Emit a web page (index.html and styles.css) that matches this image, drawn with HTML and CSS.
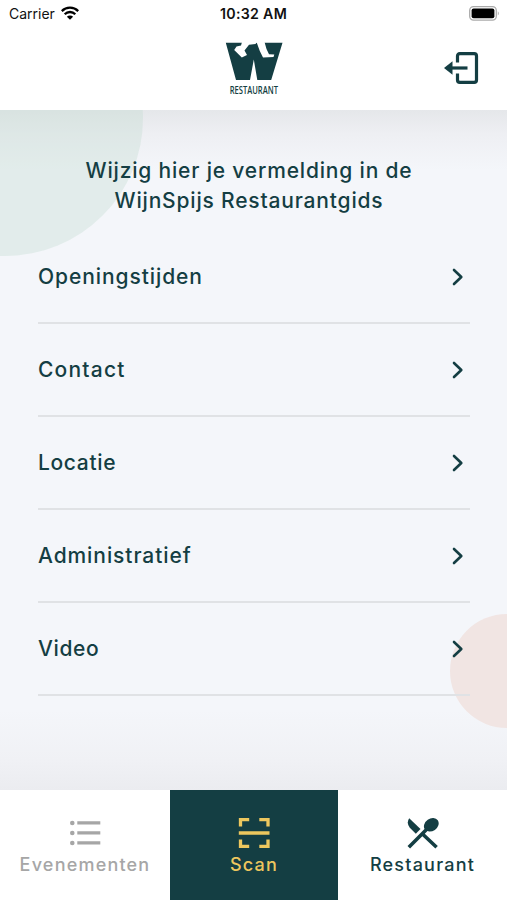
FILE: index.html
```
<!DOCTYPE html>
<html lang="nl">
<head>
    <meta charset="UTF-8">
    <meta name="viewport" content="width=device-width, initial-scale=1.0">
    <title>WijnSpijs Restaurant</title>
    <link rel="stylesheet" href="styles.css">
</head>
<body>
    <div class="app">
        <header class="header">
            <div class="status-bar">
                <div class="carrier">
                    <span class="carrier-name">Carrier</span>
                    <svg width="18" height="14" viewBox="0 0 18 14">
                        <g fill="none" stroke="#000" stroke-width="2.3">
                            <path d="M.8 5.1a11.6 11.6 0 0 1 16.4 0"/>
                            <path d="M3.7 8.2a7.5 7.5 0 0 1 10.6 0"/>
                        </g>
                        <path d="M9 13.8 5.9 10.7a4.4 4.4 0 0 1 6.2 0z"/>
                    </svg>
                </div>
                <div class="time">10:32 AM</div>
                <svg class="battery" width="32" height="15" viewBox="0 0 32 15">
                    <rect x=".7" y=".7" width="26.6" height="13.4" rx="3.8" fill="#fff" stroke="#aaa" stroke-width="1.3"/>
                    <rect x="2.6" y="2.6" width="22.8" height="9.6" rx="2"/>
                    <path d="M28.8 5.2q2 2.2 0 4.4z" fill="#aaa"/>
                </svg>
            </div>
            <div class="title-bar">
                <div class="logo">
                    <svg width="58" height="38" viewBox="0 0 58 38">
                        <path fill="#143e43" d="M.8.8H57.5L46.2 38H32.3L28.8 17.5 25 38H11z"/>
                        <path fill="#fff" d="M17 0H32L30.5 2 24 2.8 19.5 8.5 22 13 16.8 15.6 9.2 8 11.5 4.5 16 3.5z"/>
                        <path fill="#fff" d="M31.5 0H39.5L41.5 7 44 12.3 49.3 12.6 48.5 15 38 15.6 34.8 9z"/>
                    </svg>
                    <span class="logo-text">RESTAURANT</span>
                </div>
                <svg class="logout" width="36" height="34" viewBox="0 0 36 34">
                    <g fill="none" stroke="#143e43" stroke-width="3.2">
                        <path d="M13.5 11.5V5q0-2.3 2.3-2.3h14.4q2.3 0 2.3 2.3v24q0 2.3-2.3 2.3H15.8q-2.3 0-2.3-2.3v-6.5"/>
                        <path d="M7 17h16.5"/>
                    </g>
                    <path fill="#143e43" d="M0 17 8.5 10.2v13.6z"/>
                </svg>
            </div>
        </header>

        <main class="content">
            <div class="circle circle-green"></div>
            <div class="circle circle-pink"></div>
            <h1>Wijzig hier je vermelding in de<br>WijnSpijs Restaurantgids</h1>
            <ul class="menu">
                <li><span>Openingstijden</span><svg class="chevron" viewBox="0 0 12 18"><path d="m2 2 7.3 7L2 16"/></svg></li>
                <li><span class="contact">Contact</span><svg class="chevron" viewBox="0 0 12 18"><path d="m2 2 7.3 7L2 16"/></svg></li>
                <li><span class="locatie">Locatie</span><svg class="chevron" viewBox="0 0 12 18"><path d="m2 2 7.3 7L2 16"/></svg></li>
                <li><span>Administratief</span><svg class="chevron" viewBox="0 0 12 18"><path d="m2 2 7.3 7L2 16"/></svg></li>
                <li><span class="video">Video</span><svg class="chevron" viewBox="0 0 12 18"><path d="m2 2 7.3 7L2 16"/></svg></li>
            </ul>
        </main>

        <nav class="tabs">
            <div class="tab tab-events">
                <svg width="32" height="32" viewBox="0 0 32 32" fill="#a6a6a6">
                    <circle cx="3.3" cy="6" r="2.3"/>
                    <circle cx="3.3" cy="16" r="2.3"/>
                    <circle cx="3.3" cy="26" r="2.3"/>
                    <path d="M8.3 4.3h23v3.3h-23zM8.3 14.3h23v3.3h-23zM8.3 24.3h23v3.3h-23z"/>
                </svg>
                <span>Evenementen</span>
            </div>
            <div class="tab tab-scan">
                <svg width="32" height="32" viewBox="0 0 32 32">
                    <path fill="none" stroke="#edc75e" stroke-width="3.3" d="M2.5 9.5V2.6h8.7M21.3 2.6H30v6.9M2.5 22.5v6.9h8.7M21.3 29.4H30v-6.9M.8 16h30.7"/>
                </svg>
                <span>Scan</span>
            </div>
            <div class="tab tab-restaurant">
                <svg width="32" height="32" viewBox="0 0 32 32">
                    <g fill="#143e43">
                        <path d="M2.2 1.2 13.5 12 8.8 16.8 2.8 10.8Q-1 6 2.2 1.2z"/>
                        <ellipse cx="24.3" cy="7.8" rx="7.9" ry="6.2" transform="rotate(-35 24.3 7.8)"/>
                    </g>
                    <path fill="none" stroke="#143e43" stroke-width="3.6" d="M1.8 30.2 21 11M15 16.5 29.6 30.2"/>
                </svg>
                <span>Restaurant</span>
            </div>
        </nav>
    </div>
</body>
</html>
```
FILE: styles.css
```
* {
    box-sizing: border-box;
}

body {
    margin: 0;
    font-family: Inter, "Liberation Sans", sans-serif;
    color: #143e43;
    background: #fff;
}

.app {
    width: 507px;
    height: 900px;
    display: flex;
    flex-direction: column;
    overflow: hidden;
}

.header {
    height: 110px;
    background: #fff;
}

.status-bar {
    display: grid;
    grid-template-columns: 1fr auto 1fr;
    align-items: center;
    height: 28px;
    padding: 0 6px 0 9px;
    color: #111;
    font-size: 14px;
}

.carrier {
    display: flex;
    align-items: center;
    gap: 6px;
    margin-top: -2px;
}

.time {
    margin: -2px 3px 0 0;
    font-weight: 600;
    font-size: 14.2px;
    letter-spacing: .3px;
}

.battery {
    justify-self: end;
    margin-top: -2px;
}

.title-bar {
    display: grid;
    grid-template-columns: 1fr 58px 1fr;
    height: 82px;
    padding: 14px 28px 0 28px;
}

.logo {
    grid-column: 2;
    display: flex;
    flex-direction: column;
    align-items: center;
}

.logo-text {
    margin-top: 4px;
    font: 600 10px/12px "Open Sans", sans-serif;
    transform: scaleX(.76);
}

.logout {
    justify-self: end;
    margin: 9px -1px 0 0;
}

.content {
    position: relative;
    flex: 1;
    overflow: hidden;
    padding: 46px 37px 0 38px;
    background: linear-gradient(#e5e7ea 0, #eeeff3 24px, #f4f6fa 60px, #f4f6fa 600px, #f0f1f5 650px, #ebecf0 100%);
}

.circle {
    position: absolute;
    border-radius: 50%;
}

.circle-green {
    left: -133px;
    top: -130px;
    width: 276px;
    height: 276px;
    background: rgba(194, 221, 210, .37);
}

.circle-pink {
    right: -57px;
    top: 504px;
    width: 114px;
    height: 114px;
    background: #f1e5e3;
}

h1 {
    position: relative;
    margin: 0;
    padding-right: 10px;
    text-align: center;
    font-size: 21px;
    font-weight: 550;
    line-height: 29.5px;
    letter-spacing: .82px;
    white-space: nowrap;
}

.menu {
    position: relative;
    margin: 16px 0 0;
    padding: 0;
    list-style: none;
}

.menu li {
    display: flex;
    justify-content: space-between;
    height: 93px;
    padding: 31px 6px 0 0;
    border-bottom: 2px solid #e0e2e5;
    font-size: 21px;
    font-weight: 550;
    line-height: 30px;
    letter-spacing: .92px;
}

.menu .contact {
    letter-spacing: 1.2px;
}

.menu .locatie,
.menu .video {
    letter-spacing: .65px;
}

.chevron {
    width: 12px;
    height: 18px;
    margin-top: 6px;
    fill: none;
    stroke: #143e43;
    stroke-width: 2.6;
    stroke-linecap: round;
    stroke-linejoin: round;
}

.tabs {
    display: grid;
    grid-template-columns: 170px 168px 169px;
    height: 110px;
    background: #fff;
}

.tab {
    display: flex;
    flex-direction: column;
    align-items: center;
    padding-top: 27px;
    font-size: 18px;
    font-weight: 550;
    line-height: 31px;
    letter-spacing: 1.2px;
}

.tab-events {
    color: #a6a6a6;
}

.tab-scan {
    color: #edc75e;
    background: #143e43;
}
```
